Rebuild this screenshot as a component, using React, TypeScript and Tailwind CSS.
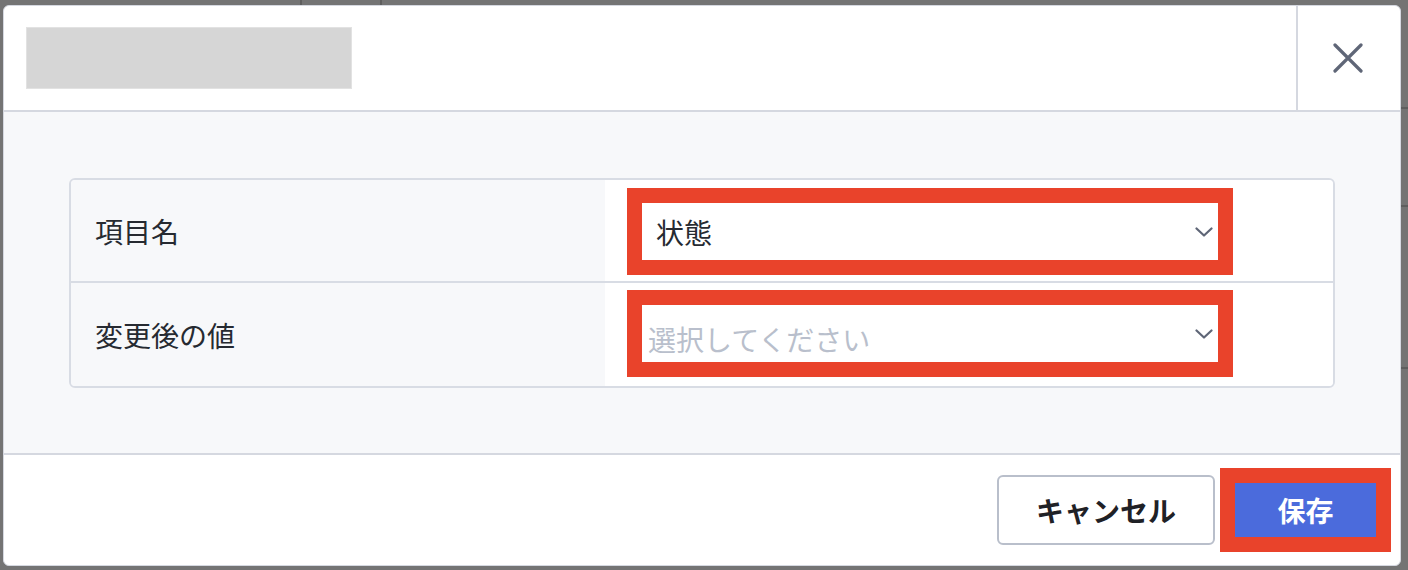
import React from "react";

const font = { fontFamily: '"Noto Sans CJK JP", "Noto Sans", sans-serif' };

function Chevron() {
  return (
    <svg width="18" height="10" viewBox="0 0 18 10" fill="none" className="shrink-0">
      <path d="M1.5 1.5 L9 8.5 L16.5 1.5" stroke="#5f6677" strokeWidth="2.2" strokeLinecap="round" strokeLinejoin="round" />
    </svg>
  );
}

function SelectBox({ value, placeholder }: { value?: string; placeholder?: string }) {
  return (
    <div className="border-[15px] border-[#e9432b] w-[606px]">
      <div className={"h-[57px] bg-white flex items-center justify-between pr-[5px] " + (value ? "pl-[14px]" : "pl-[6px]")}>
        {value ? (
          <span className="text-[28px] leading-none text-[#262a31]">{value}</span>
        ) : (
          <span className="text-[28px] leading-none text-[#b9bfcc] mt-[10px]">{placeholder}</span>
        )}
        <Chevron />
      </div>
    </div>
  );
}

export default function App() {
  return (
    <div className="w-[1408px] h-[570px] bg-[#747474] overflow-hidden relative" style={font}>
      <div className="absolute left-[300px] top-0 w-[2px] h-[6px] bg-[#5e5e5e]" />
      <div className="absolute left-[380px] top-0 w-[2px] h-[6px] bg-[#5e5e5e]" />
      <div className="absolute left-[1401px] top-[107px] w-[7px] h-[2px] bg-[#5e5e5e]" />
      <div className="absolute left-[1401px] top-[205px] w-[7px] h-[2px] bg-[#5e5e5e]" />
      <div className="absolute left-[1401px] top-[367px] w-[7px] h-[2px] bg-[#5e5e5e]" />
      <div className="pt-[5px] pl-[3px]">
        <div className="relative w-[1398px] h-[561px] rounded-[6px] bg-white border border-[#d5d8e0] flex flex-col overflow-hidden">
          {/* header */}
          <div className="h-[106px] shrink-0 flex border-b-2 border-[#d5d8e0]">
            <div className="flex-1 pl-[22px] pt-[21px]">
              <div className="w-[326px] h-[62px] bg-[#d6d6d6] border border-[#e2e2e2]" />
            </div>
            <div className="w-[104px] border-l-2 border-[#d5d8e0] flex items-center justify-center pr-[2px]">
              <svg width="30" height="30" viewBox="0 0 30 30" fill="none">
                <path d="M2 2 L28 28 M28 2 L2 28" stroke="#5f6677" strokeWidth="3.2" strokeLinecap="round" />
              </svg>
            </div>
          </div>
          {/* body */}
          <div className="h-[343px] shrink-0 bg-[#f7f8fa] border-b-2 border-[#d5d8e0] px-[65px] pt-[66px]">
            <div className="border-2 border-[#d8dce4] rounded-[6px] overflow-hidden">
              <div className="flex h-[103px] border-b-2 border-[#d8dce4]">
                <div className="w-[534px] bg-[#f7f8fa] flex items-center pl-[24px]">
                  <span className="text-[28px] leading-none text-[#262a31]">項目名</span>
                </div>
                <div className="flex-1 bg-white flex items-center pl-[22px] pt-[2px]">
                  <SelectBox value="状態" />
                </div>
              </div>
              <div className="flex h-[103px]">
                <div className="w-[534px] bg-[#f7f8fa] flex items-center pl-[24px]">
                  <span className="text-[28px] leading-none text-[#262a31]">変更後の値</span>
                </div>
                <div className="flex-1 bg-white flex items-center pl-[22px] pb-[2px]">
                  <SelectBox placeholder="選択してください" />
                </div>
              </div>
            </div>
          </div>
          {/* footer */}
          <div className="flex-1 flex items-center justify-end pr-[9px] gap-[5px]">
            <button className="w-[218px] h-[70px] rounded-[6px] border-2 border-[#b9bfcb] bg-white flex items-center justify-center">
              <span className="text-[28px] leading-none font-bold text-[#1f2126]">キャンセル</span>
            </button>
            <div className="border-[15px] border-[#e9432b]">
              <button className="w-[141px] h-[54px] bg-[#4b6bdc] flex items-center justify-center">
                <span className="text-[28px] leading-none font-bold text-white">保存</span>
              </button>
            </div>
          </div>
        </div>
      </div>
    </div>
  );
}
